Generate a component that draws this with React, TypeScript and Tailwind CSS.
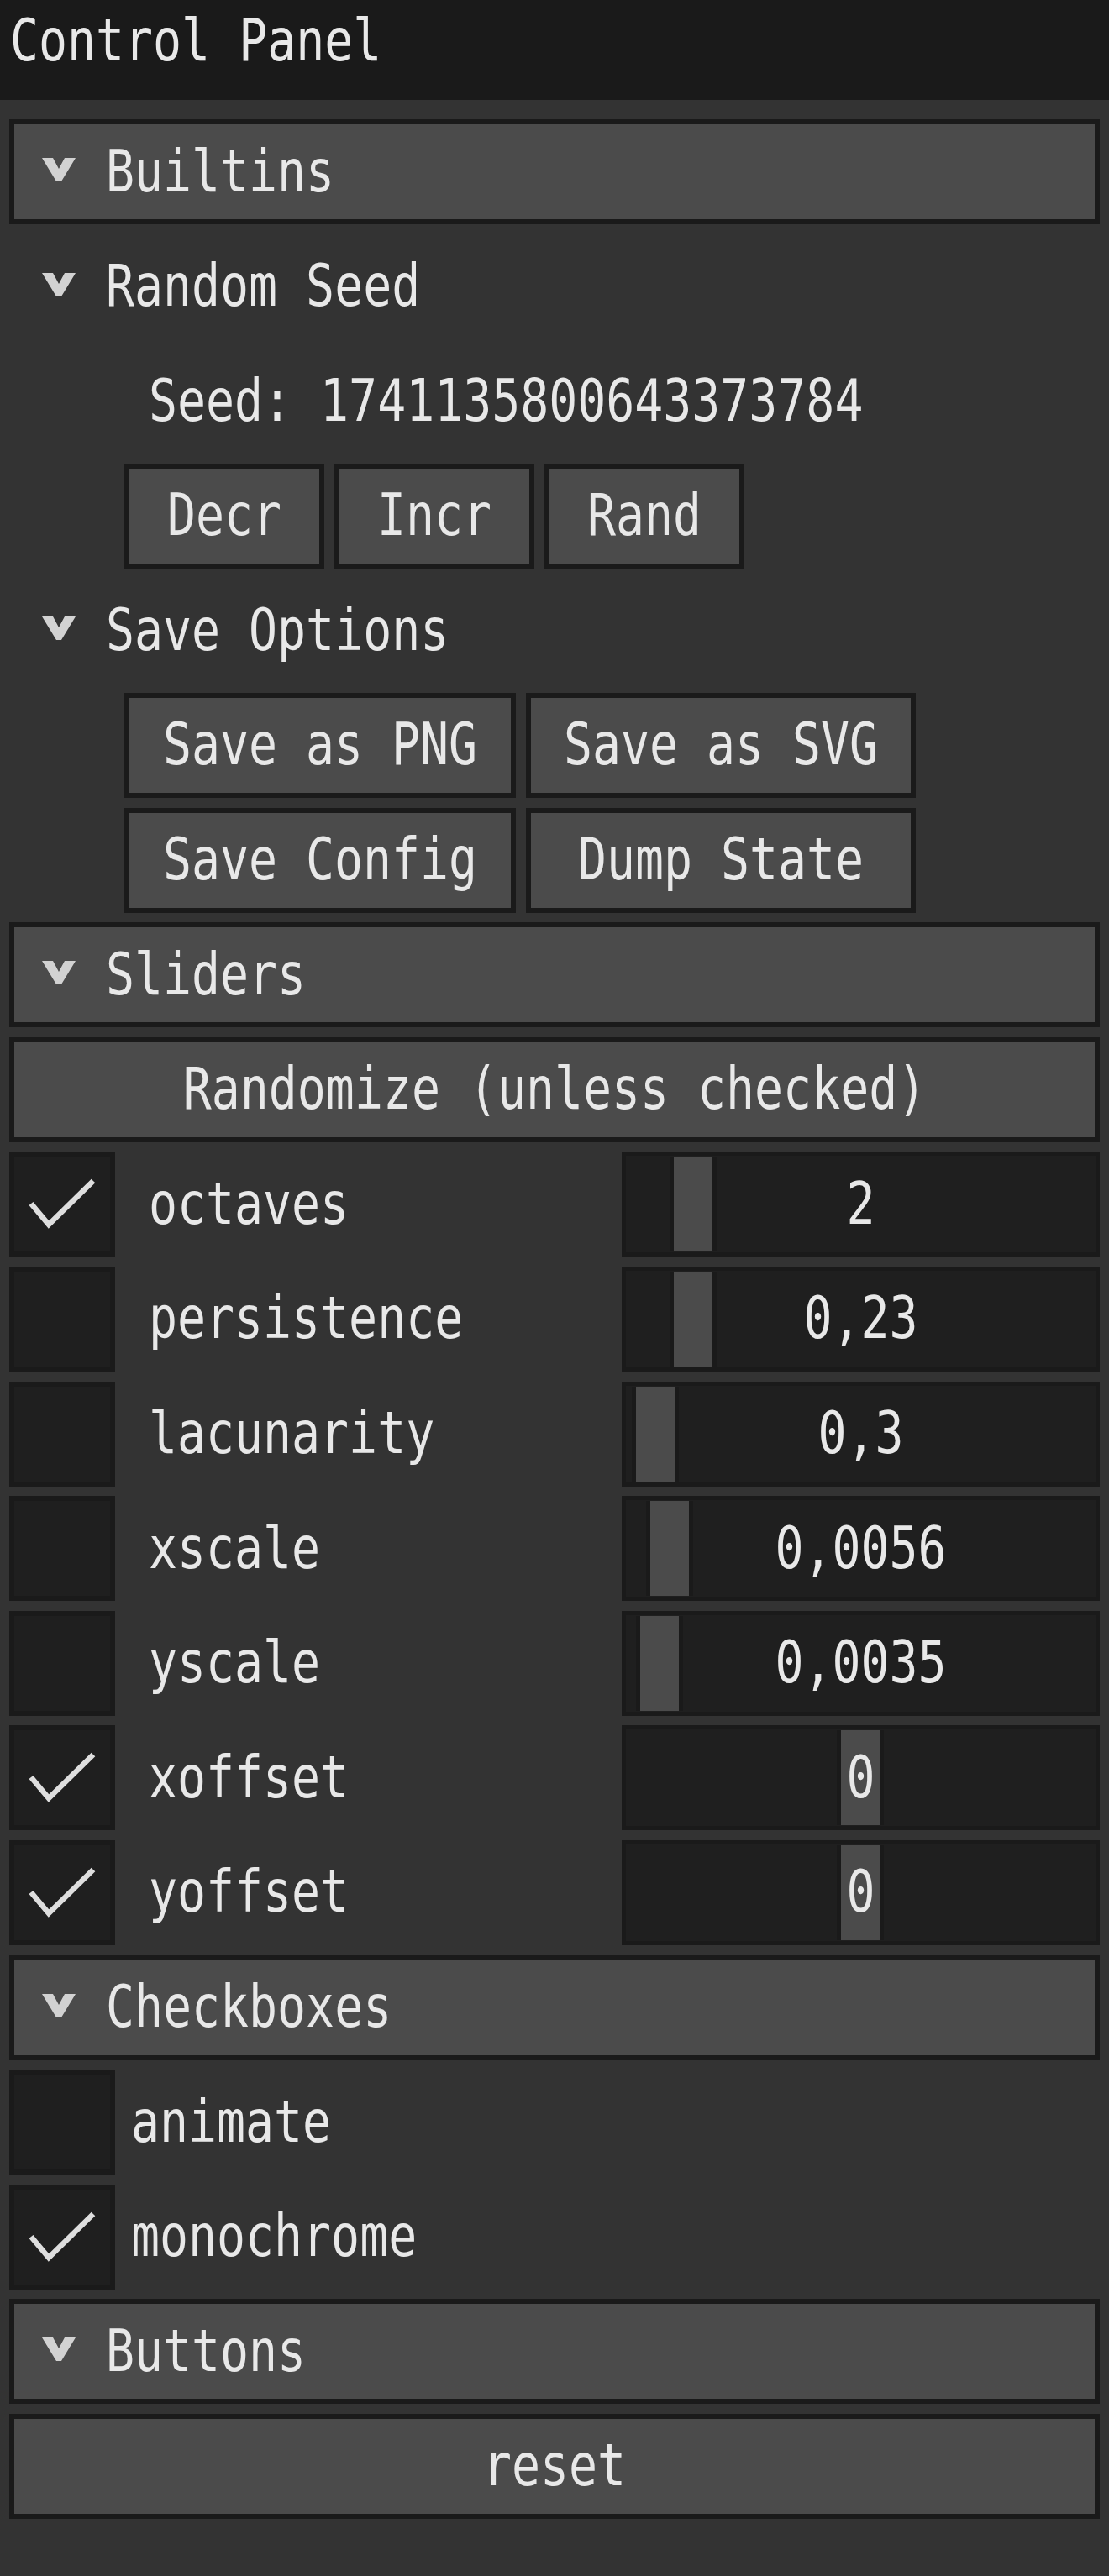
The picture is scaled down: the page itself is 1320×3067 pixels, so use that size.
import React from "react";

function T({ children, className = "" }: { children: React.ReactNode; className?: string }) {
  return (
    <span className={`inline-block origin-center scale-y-[1.22] whitespace-pre leading-[56px] ${className}`}>
      {children}
    </span>
  );
}

function Chevron() {
  return (
    <svg width="40" height="28" viewBox="0 0 40 28" className="shrink-0">
      <polygon points="0,0 13,0 20,13 27,0 40,0 23,28 17,28" fill="#d2d2d2" />
    </svg>
  );
}

function Header({ title }: { title: string }) {
  return (
    <div className="h-[125px] shrink-0 border-[6px] border-[#1a1a1a] bg-[#4b4b4b] flex items-center">
      <div className="ml-[33px] -mt-[5px] flex">
        <Chevron />
      </div>
      <T className="ml-[36px]">{title}</T>
    </div>
  );
}

function TreeNode({ title }: { title: string }) {
  return (
    <div className="h-[125px] shrink-0 flex items-center">
      <div className="ml-[39px] -mt-[5px] flex">
        <Chevron />
      </div>
      <T className="ml-[36px]">{title}</T>
    </div>
  );
}

function Btn({ label, w }: { label: string; w: string }) {
  return (
    <div className={`${w} h-[125px] shrink-0 border-[6px] border-[#1a1a1a] bg-[#4b4b4b] flex items-center justify-center`}>
      <T>{label}</T>
    </div>
  );
}

function CheckBox({ checked }: { checked: boolean }) {
  return (
    <div className="w-[126px] h-[125px] shrink-0 border-[6px] border-[#1a1a1a] bg-[#1f1f1f] relative">
      {checked && (
        <svg width="126" height="125" viewBox="0 0 126 125" className="absolute -left-[6px] -top-[6px]">
          <polyline points="26,62 47,87 100,35" fill="none" stroke="#dedede" strokeWidth="6.5" />
        </svg>
      )}
    </div>
  );
}

function SliderRow({ name, value, grab, checked }: { name: string; value: string; grab: number; checked: boolean }) {
  return (
    <div className="h-[125px] shrink-0 flex items-center">
      <CheckBox checked={checked} />
      <div className="flex-1 pl-[40px] flex items-center">
        <T>{name}</T>
      </div>
      <div className="relative w-[569px] h-full border-[5px] border-[#1a1a1a] bg-[#1f1f1f] flex items-center justify-center">
        <div
          className="absolute top-px bottom-px w-[56px] bg-[#4b4b4b] border-x-[5px] border-[#1a1a1a]"
          style={{ left: grab - 740 - 10 }}
        />
        <T className="relative">{value}</T>
      </div>
    </div>
  );
}

function CheckRow({ name, checked }: { name: string; checked: boolean }) {
  return (
    <div className="h-[125px] shrink-0 flex items-center">
      <CheckBox checked={checked} />
      <T className="ml-[19px]">{name}</T>
    </div>
  );
}

export default function App() {
  const sliders = [
    { name: "octaves", value: "2", grab: 802, checked: true },
    { name: "persistence", value: "0,23", grab: 802, checked: false },
    { name: "lacunarity", value: "0,3", grab: 757, checked: false },
    { name: "xscale", value: "0,0056", grab: 774, checked: false },
    { name: "yscale", value: "0,0035", grab: 762, checked: false },
    { name: "xoffset", value: "0", grab: 1001, checked: true },
    { name: "yoffset", value: "0", grab: 1001, checked: true },
  ];

  return (
    <div className="min-h-[3067px] bg-[#333333] font-['DejaVu_Sans_Mono','Liberation_Mono',monospace] text-[56.5px] text-[#e8e8e8]">
      <div className="h-[119px] bg-[#1a1a1a] pl-[12px] pt-[21px] flex items-start">
        <T>Control Panel</T>
      </div>
      <div className="flex flex-col gap-[11.6px] px-[11px] pt-[23px]">
        <Header title="Builtins" />
        <TreeNode title="Random Seed" />
        <div className="h-[125px] shrink-0 flex items-center pl-[166px]">
          <T>Seed: 1741135800643373784</T>
        </div>
        <div className="h-[125px] shrink-0 flex gap-[12px] pl-[137px]">
          <Btn label="Decr" w="w-[238px]" />
          <Btn label="Incr" w="w-[238px]" />
          <Btn label="Rand" w="w-[238px]" />
        </div>
        <TreeNode title="Save Options" />
        <div className="h-[125px] shrink-0 flex gap-[12px] pl-[137px]">
          <Btn label="Save as PNG" w="w-[466px]" />
          <Btn label="Save as SVG" w="w-[464px]" />
        </div>
        <div className="h-[125px] shrink-0 flex gap-[12px] pl-[137px]">
          <Btn label="Save Config" w="w-[466px]" />
          <Btn label="Dump State" w="w-[464px]" />
        </div>
        <Header title="Sliders" />
        <Btn label="Randomize (unless checked)" w="w-full" />
        {sliders.map((s) => (
          <SliderRow key={s.name} {...s} />
        ))}
        <Header title="Checkboxes" />
        <CheckRow name="animate" checked={false} />
        <CheckRow name="monochrome" checked={true} />
        <Header title="Buttons" />
        <Btn label="reset" w="w-full" />
      </div>
    </div>
  );
}
